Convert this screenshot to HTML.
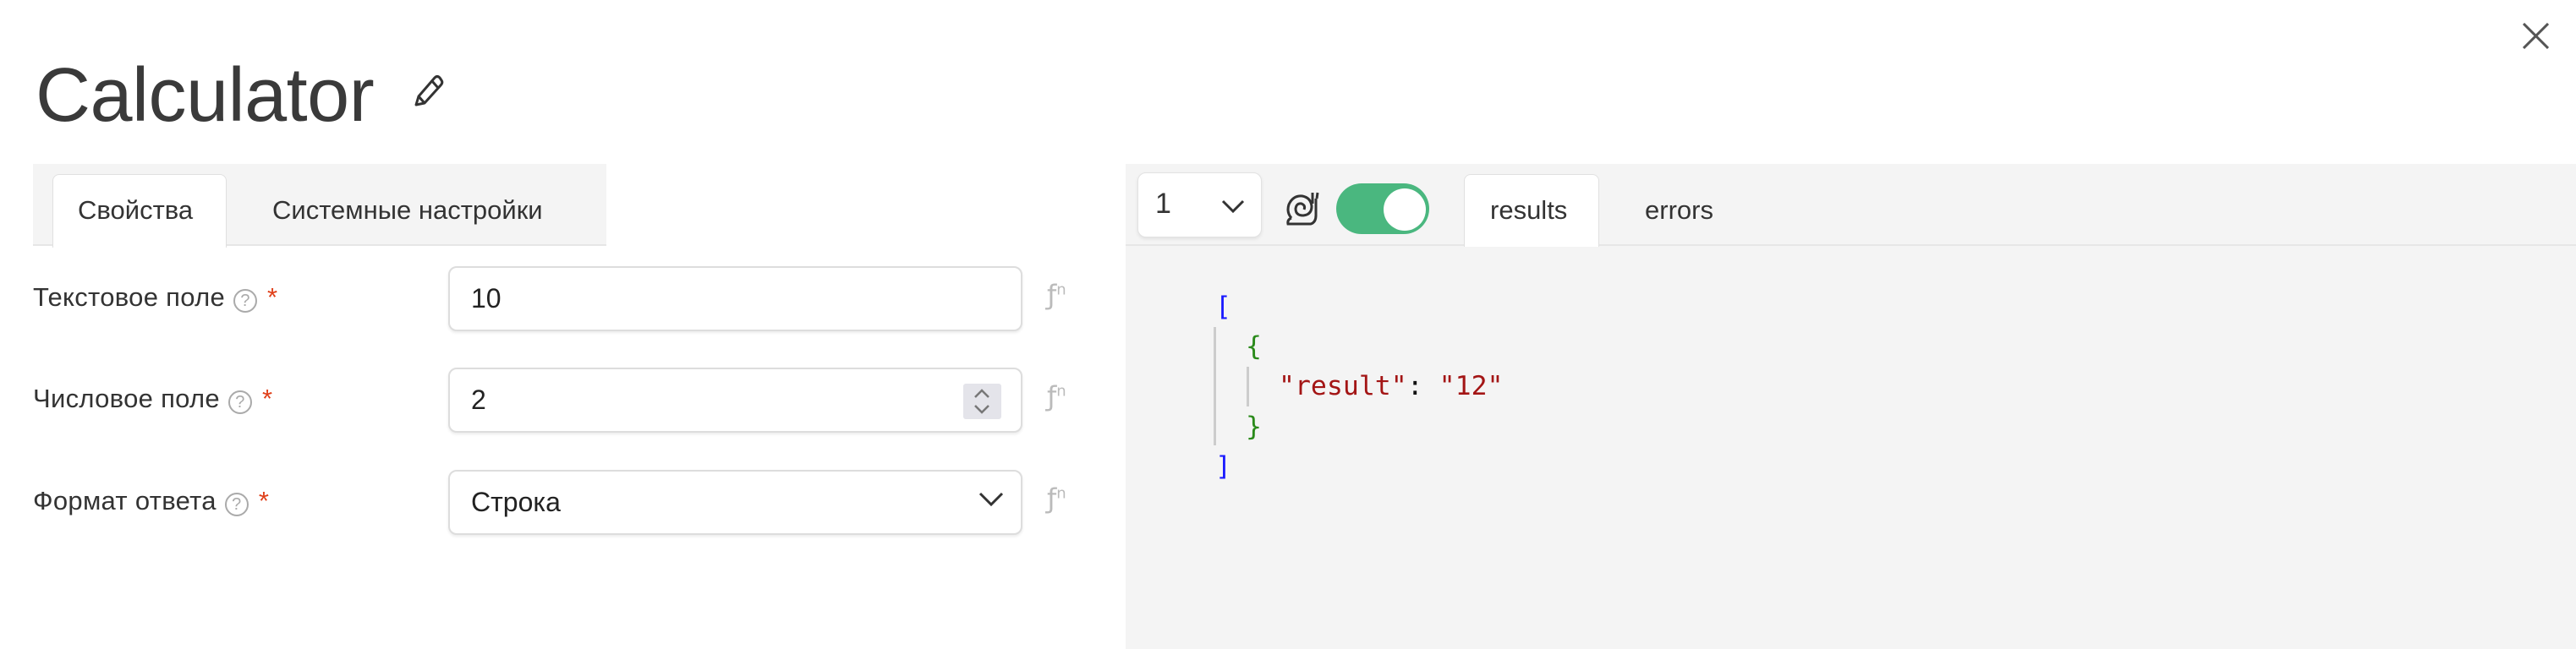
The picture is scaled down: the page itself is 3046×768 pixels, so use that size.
<!DOCTYPE html>
<html><head><meta charset="utf-8"><style>
*{margin:0;padding:0;box-sizing:border-box}
body{width:3046px;height:768px;background:#fff;position:relative;overflow:hidden;font-family:"Liberation Sans",Roboto,sans-serif;color:#333}
.a{position:absolute}
.title{left:42px;top:58px;font-size:90px;color:#3a3a3a;letter-spacing:-0.5px;line-height:110px}
.tabbar{left:39px;top:194px;width:678px;height:97px;background:#f4f4f4;border-bottom:2px solid #e6e6e6}
.tab{font-size:31px;color:#333;line-height:40px}
.act{background:#fff;border:1px solid #e0e0e0;border-bottom:none;border-radius:8px 8px 0 0}
.lbl{left:39px;font-size:31px;color:#333;line-height:40px;letter-spacing:0.3px}
.q{display:inline-block;width:28px;height:28px;border:2px solid #aaa;border-radius:50%;font-size:20px;color:#aaa;text-align:center;line-height:24px;vertical-align:0px;margin-left:10px}
.st{color:#e0401a;margin-left:12px}
.inp{left:530px;width:679px;height:77px;border:2px solid #ddd;border-radius:10px;background:#fff;box-shadow:0 2px 3px rgba(0,0,0,.08);font-size:32px;line-height:73px;padding-left:25px;color:#222}
.fn{left:1238px;font-size:32px;color:#bbb;font-family:"DejaVu Sans",sans-serif}
.panel{left:1331px;top:194px;width:1715px;height:574px;background:#f4f4f4}
.mono{font-family:"DejaVu Sans Mono","Liberation Mono",monospace;font-size:31.5px;line-height:47.5px}
</style></head><body>
<div class="a title">Calculator</div>
<svg class="a" style="left:486px;top:86px" width="40" height="44" viewBox="0 0 40 44"><path d="M6 38 L9 28 L28 6 Q31 3 34 6 L36 9 Q38 12 35 15 L16 36 Z M9 28 L16 36 M25 10 L32 18" fill="none" stroke="#333" stroke-width="3" stroke-linejoin="round"/></svg>
<svg class="a" style="left:2983px;top:27px" width="31" height="31"><path d="M1 1L30 30M30 1L1 30" stroke="#555" stroke-width="3"/></svg>

<div class="a tabbar"></div>
<div class="a act" style="left:62px;top:206px;width:206px;height:87px"></div>
<div class="a tab" style="left:92px;top:229px">Свойства</div>
<div class="a tab" style="left:322px;top:229px">Системные настройки</div>

<div class="a lbl" style="top:332px">Текстовое поле<span class="q">?</span><span class="st">*</span></div>
<div class="a lbl" style="top:452px">Числовое поле<span class="q">?</span><span class="st">*</span></div>
<div class="a lbl" style="top:573px">Формат ответа<span class="q">?</span><span class="st">*</span></div>

<div class="a inp" style="top:315px">10</div>
<div class="a inp" style="top:435px">2</div>
<div class="a" style="left:1139px;top:454px;width:45px;height:42px;background:#e4e4ea;border-radius:3px"></div>
<svg class="a" style="left:1149px;top:458px" width="24" height="34"><path d="M4 12L12 4L20 12M4 22L12 30L20 22" fill="none" stroke="#777" stroke-width="2.5"/></svg>
<div class="a inp" style="top:556px">Строка</div>
<svg class="a" style="left:1157px;top:581px" width="30" height="20"><path d="M2 3L15 16L28 3" fill="none" stroke="#333" stroke-width="3"/></svg>

<div class="a fn" style="top:330px">ƒ<sup style="font-size:18px">n</sup></div>
<div class="a fn" style="top:450px">ƒ<sup style="font-size:18px">n</sup></div>
<div class="a fn" style="top:571px">ƒ<sup style="font-size:18px">n</sup></div>

<div class="a panel"></div>
<div class="a" style="left:1331px;top:289px;width:1715px;height:2px;background:#e6e6e6"></div>
<div class="a" style="left:1345px;top:204px;width:147px;height:77px;background:#fff;border:1px solid #e2e2e2;border-radius:10px;box-shadow:0 2px 4px rgba(0,0,0,.08)"></div>
<div class="a" style="left:1366px;top:222px;font-size:34px;color:#333">1</div>
<svg class="a" style="left:1444px;top:236px" width="28" height="18"><path d="M2 2L14 14L26 2" fill="none" stroke="#333" stroke-width="3"/></svg>
<svg class="a" style="left:1519px;top:225px" width="42" height="44" viewBox="0 0 42 44"><path d="M8 33 Q2 26 5 17 Q10 6 21 7 Q31 9 32 19 Q32 29 22 30 Q13 30 13 22 Q14 15 20 16 Q25 18 23 23" fill="none" stroke="#333" stroke-width="3"/><path d="M8 33 Q3 35 4 40 L31 40 Q37 38 37 30 L37 10 M33 16 L33 3 M38 10 L39 3" fill="none" stroke="#333" stroke-width="3"/></svg>
<div class="a" style="left:1580px;top:217px;width:110px;height:60px;background:#4ab77f;border-radius:30px"></div>
<div class="a" style="left:1636px;top:223px;width:50px;height:50px;background:#fff;border-radius:50%"></div>
<div class="a act" style="left:1731px;top:206px;width:160px;height:86px;background:#fff"></div>
<div class="a tab" style="left:1762px;top:229px">results</div>
<div class="a tab" style="left:1945px;top:229px">errors</div>

<div class="a" style="left:1435px;top:387px;width:3px;height:140px;background:#ccc"></div>
<div class="a" style="left:1474px;top:434px;width:3px;height:47px;background:#ccc"></div>
<div class="a mono" style="left:1437px;top:340px;color:#1a1aff">[</div>
<div class="a mono" style="left:1473px;top:387px;color:#2a8a1a">{</div>
<div class="a mono" style="left:1512px;top:434px;color:#a31515">"result"<span style="color:#111">: </span>"12"</div>
<div class="a mono" style="left:1473px;top:482px;color:#2a8a1a">}</div>
<div class="a mono" style="left:1437px;top:529px;color:#1a1aff">]</div>
</body></html>
